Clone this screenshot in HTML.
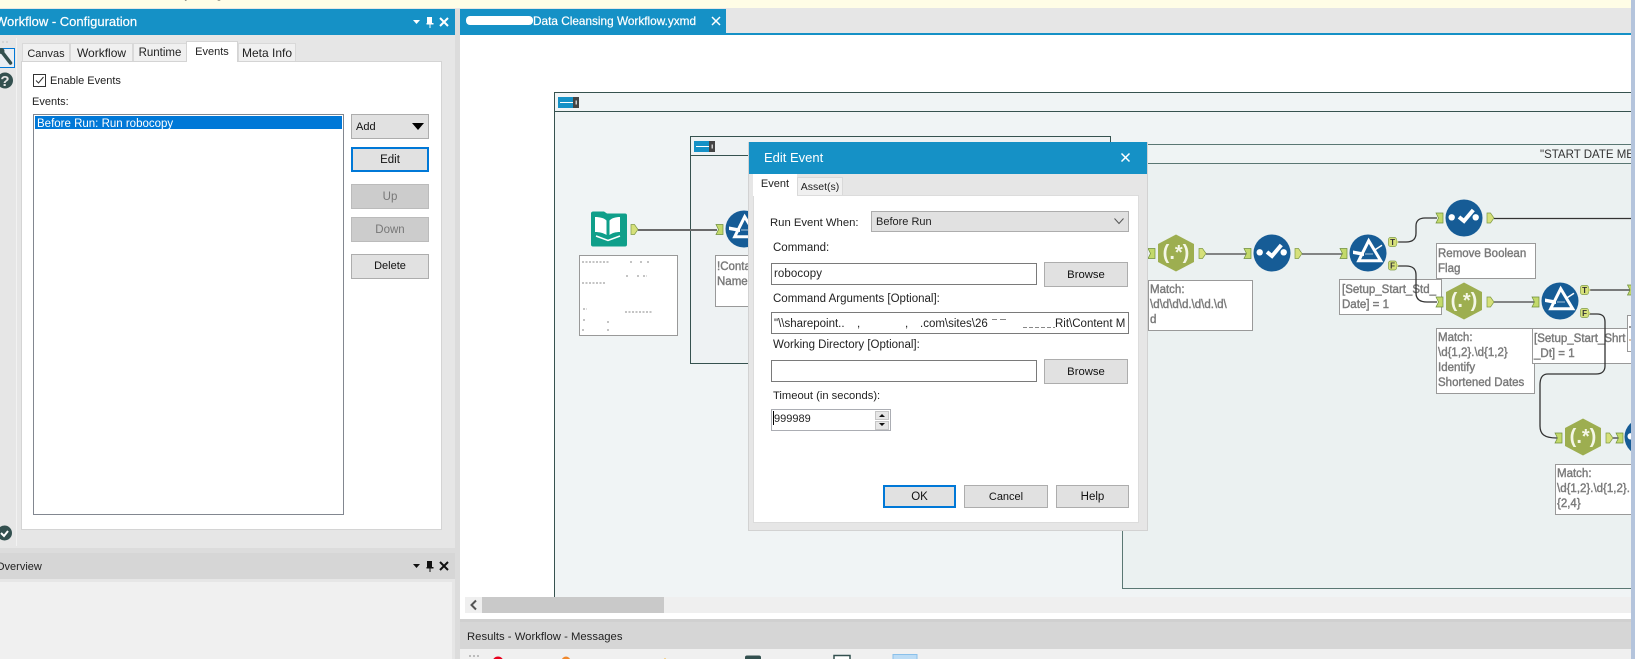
<!DOCTYPE html>
<html><head><meta charset="utf-8"><title>Workflow - Configuration</title>
<style>
html,body{margin:0;padding:0;background:#e6e6e6}
#p{position:relative;width:1635px;height:659px;overflow:hidden;background:#e6e6e6;font-family:"Liberation Sans",sans-serif;font-size:11.5px;color:#222}
#p div{position:absolute;box-sizing:border-box;white-space:nowrap}
.t{line-height:16px;height:16px}
.btn{background:#e1e1e1;border:1px solid #adadad;text-align:center;color:#111}
.dis{background:#ccc;border:1px solid #bbb;color:#777}
.foc{border:2px solid #0078d7}
.inp{background:#fff;border:1px solid #7a7a7a}
.tab{background:#f0f0f0;border:1px solid #d9d9d9;border-bottom:none;text-align:center;line-height:20px}
svg text{font-family:"Liberation Sans",sans-serif}
.a{font-size:11.500px;fill:#7a7a7a;stroke:#7a7a7a;stroke-width:.4px}
</style></head><body>
<div id="p">
<!-- top strip -->
<div style="left:0;top:0;width:1635px;height:8px;background:#fffde6"></div>
<div class="t" style="left:100px;top:-14px;color:#333;font-size:12px">Run Workflow by using</div>

<!-- left panel -->
<div style="left:0;top:9px;width:455px;height:26px;background:#1591c6"></div>
<div class="t" style="left:-5px;top:14px;color:#fff;font-size:13px;-webkit-text-stroke:.2px #fff">Workflow - Configuration</div>
<svg style="position:absolute;left:405px;top:12px" width="50" height="20" viewBox="0 0 50 20">
<path d="M8 8h7l-3.500 4z" fill="#fff"/>
<path d="M22 5h5v6h1.500v1.500h-3V16h-1v-3.500h-3V11H22z" fill="#fff"/>
<path d="M35 6l8 8M43 6l-8 8" stroke="#fff" stroke-width="2" fill="none"/>
</svg>
<div style="left:16px;top:38px;width:1px;height:508px;background:#f2f2f2"></div>
<div style="left:0;top:48px;width:15px;height:20px;border:1px solid #0078d7;border-left:none;background:#e9eef3"></div>
<svg style="position:absolute;left:0;top:40px" width="16" height="54" viewBox="0 0 16 54">
<path d="M2 2h2M6 2h2" stroke="#c4c4c4"/>
<path d="M2 12L10.500 23" stroke="#33504f" stroke-width="3.500" stroke-linecap="round" fill="none"/>
<circle cx="1.500" cy="11" r="3" fill="#33504f"/>
<circle cx="5" cy="40.500" r="8" fill="#33504f"/>
<text x="5" y="46" font-size="15" font-weight="bold" fill="#e6e6e6" text-anchor="middle">?</text>
</svg>
<svg style="position:absolute;left:0;top:525px" width="16" height="16" viewBox="0 0 16 16">
<circle cx="4.500" cy="8" r="7.500" fill="#33504f"/>
<path d="M1 8l3 3 4-5" stroke="#fff" stroke-width="2" fill="none"/>
</svg>
<div class="tab" style="left:22px;top:43px;width:48px;height:19px;font-size:11px">Canvas</div>
<div class="tab" style="left:70px;top:43px;width:63px;height:19px;font-size:12px;line-height:18px">Workflow</div>
<div class="tab" style="left:133px;top:43px;width:54px;height:19px;font-size:11.500px;line-height:18px">Runtime</div>
<div class="tab" style="left:238px;top:43px;width:58px;height:19px;font-size:12px;line-height:18px">Meta Info</div>
<div style="left:21px;top:61px;width:421px;height:469px;background:#fff;border:1px solid #d4d4d4"></div>
<div class="tab" style="left:186px;top:41px;width:52px;height:21px;background:#fff;line-height:20px;border-color:#d4d4d4;font-size:11px">Events</div>
<div style="left:33px;top:74px;width:13px;height:13px;border:1px solid #333;background:#fff"></div>
<svg style="position:absolute;left:33px;top:74px" width="13" height="13" viewBox="0 0 13 13"><path d="M3 6.500l2.500 2.500 5-6" stroke="#333" fill="none" stroke-width="1"/></svg>
<div class="t" style="left:50px;top:73px;font-size:11px">Enable Events</div>
<div class="t" style="left:32px;top:94px;font-size:11px">Events:</div>
<div style="left:33px;top:114px;width:311px;height:401px;background:#fff;border:1px solid #828790"></div>
<div style="left:35px;top:116px;width:307px;height:13px;background:#0078d7"></div>
<div class="t" style="left:37px;top:115px;color:#fff;line-height:18px">Before Run: Run robocopy</div>
<div class="btn" style="left:351px;top:114px;width:78px;height:25px;text-align:left;padding-left:4px;line-height:25px;font-size:11px">Add</div>
<svg style="position:absolute;left:411px;top:122px" width="14" height="9" viewBox="0 0 14 9"><path d="M1 1h12L7 8z" fill="#000"/></svg>
<div class="btn foc" style="left:351px;top:147px;width:78px;height:25px;line-height:23px">Edit</div>
<div class="btn dis" style="left:351px;top:184px;width:78px;height:25px;line-height:25px">Up</div>
<div class="btn dis" style="left:351px;top:217px;width:78px;height:25px;line-height:25px">Down</div>
<div class="btn" style="left:351px;top:254px;width:78px;height:25px;line-height:23px;font-size:11px">Delete</div>

<!-- overview -->
<div style="left:0;top:548px;width:455px;height:5px;background:#dcdcdc"></div>
<div style="left:0;top:553px;width:455px;height:26px;background:#d6d6d6"></div>
<div class="t" style="left:-4px;top:559px;font-size:11px;color:#222">Overview</div>
<svg style="position:absolute;left:405px;top:556px" width="50" height="20" viewBox="0 0 50 20">
<path d="M8 8h7l-3.500 4z" fill="#111"/>
<path d="M22 5h5v6h1.500v1.500h-3V16h-1v-3.500h-3V11H22z" fill="#111"/>
<path d="M35 6l8 8M43 6l-8 8" stroke="#111" stroke-width="2" fill="none"/>
</svg>
<div style="left:0;top:582px;width:452px;height:77px;background:#f0f0f0"></div>
<div style="left:455px;top:9px;width:5px;height:650px;background:#dcdcdc"></div>

<!-- doc tabs -->
<div style="left:726px;top:9px;width:909px;height:24px;background:#e6e6e6"></div>
<div style="left:726px;top:33px;width:909px;height:2px;background:#1591c6"></div>
<div style="left:460px;top:9px;width:266px;height:26px;background:#1591c6"></div>
<div style="left:466px;top:16px;width:67px;height:9px;background:#fff;border-radius:4px"></div>
<div class="t" style="left:533px;top:13px;color:#fff;font-size:11.800px;-webkit-text-stroke:.2px #fff">Data Cleansing Workflow.yxmd</div>
<svg style="position:absolute;left:710px;top:15px" width="14" height="14" viewBox="0 0 14 14"><path d="M2 2l8 8M10 2l-8 8" stroke="#fff" stroke-width="1.500" fill="none"/></svg>

<!-- canvas -->
<div style="left:460px;top:35px;width:1171px;height:584px;background:#fff"></div>
<svg style="position:absolute;left:0;top:0" width="1635" height="659" viewBox="0 0 1635 659">
<defs>
<g id="inA"><path d="M-3.500-5H3.500V5H-3.500L-1 0z" fill="#c3d96b" stroke="#6f8f3c" stroke-width=".7"/></g>
<g id="outA"><path d="M-3.500-5H0L3.500 0 0 5H-3.500z" fill="#d6e07a" stroke="#7f9a45" stroke-width=".7"/></g>
<g id="sel"><circle r="18.500" fill="#165c96"/><circle cx="-12.300" cy="-.7" r="3.200" fill="#fff"/><circle cx="11.700" cy="-.7" r="3.200" fill="#fff"/><path d="M-5-1L0 3 9.300-8" stroke="#fff" stroke-width="4" fill="none"/></g>
<g id="flt"><circle r="18.500" fill="#165c96"/><path d="M.7-12.300L-9.300 7.700H12.700z" stroke="#fff" stroke-width="3" fill="none"/><path d="M-15-2.500L-4-.5V3L-15 1z" fill="#fff"/><path d="M6.700-3L14-7.700" stroke="#fff" stroke-width="1.500"/><path d="M-3 1H5" stroke="#a9c3d9" stroke-width="1"/></g>
<g id="rx"><path d="M0-18.500L18-9V9L0 18.500-18 9V-9z" fill="#9dae50"/><text y="6" font-size="20" font-weight="bold" fill="#f4f6e6" text-anchor="middle">(.*)</text></g>
<g id="tfT"><rect x="-4.500" y="-4.500" width="8" height="9" rx="2" fill="#d6e07a" stroke="#7f9a45" stroke-width=".7"/><path d="M3.500-2.500L5.500 0 3.500 2.500z" fill="#d6e07a"/><text x="-.5" y="3" font-size="8" font-weight="bold" fill="#333" text-anchor="middle">T</text></g>
<g id="tfF"><rect x="-4.500" y="-4.500" width="8" height="9" rx="2" fill="#d6e07a" stroke="#7f9a45" stroke-width=".7"/><path d="M3.500-2.500L5.500 0 3.500 2.500z" fill="#d6e07a"/><text x="-.5" y="3" font-size="8" font-weight="bold" fill="#333" text-anchor="middle">F</text></g>
<g id="min"><rect width="16" height="11" fill="#1591c6"/><rect x="2" y="5" width="13" height="1" fill="#fff"/><rect x="15" width="6" height="11" fill="#444"/><rect x="17.500" y="3.500" width="1.500" height="4" fill="#ccc"/></g>
</defs>
<!-- containers -->
<rect x="554.500" y="92.500" width="1100" height="505" fill="#f0f4f5" stroke="#36524f"/>
<path d="M555 111.500H1631" stroke="#36524f"/>
<use href="#min" x="558" y="97"/>
<rect x="690.500" y="136.500" width="420" height="227" fill="#eef2f3" stroke="#36524f"/>
<path d="M691 155.500H1110" stroke="#36524f"/>
<use href="#min" x="694" y="141"/>
<rect x="1122.500" y="144.500" width="600" height="444" fill="#ebf1f1" stroke="#5a7773"/>
<rect x="1123" y="145" width="510" height="18" fill="#eff4f4"/>
<path d="M1123 163.500H1631" stroke="#5a7773"/>
<text x="1540" y="158" font-size="11.500" fill="#333">"START DATE ME</text>

<!-- book -->
<path d="M591 214a2 2 0 0 1 2-2.500h11l3 2h18a2 2 0 0 1 2 2v29a2 2 0 0 1-2 2H593a2 2 0 0 1-2-2z" fill="#0f9f8a"/>
<path d="M595 217c5 0 9 1 11.500 3.500V235c-3-2-7-3-11.500-3zM620 217c-4.500 0-8 1-10.500 3.500V235c2.500-2 6-3 10.500-3z" fill="#fff"/>
<path d="M596 236l12 4.500 12-4.500" stroke="#fff" stroke-width="1.500" fill="none"/>
<use href="#outA" x="634.500" y="229.500"/>
<path d="M638 230H717" stroke="#6a6a6a" stroke-width="2"/>
<use href="#inA" x="719.500" y="229.500"/>
<use href="#flt" x="744" y="229"/>
<!-- annotation boxes -->
<rect x="579.500" y="255.500" width="98" height="80" fill="#fff" stroke="#999"/>
<path d="M582 262h28M630 262h3M640 262h2M647 262h3M626 276h3M637 276h2M643 276h4M582 283h24M583 309h4M625 312h28M583 320h3M607 322h2M582 330h2M607 330h2" stroke="#888" stroke-width="1" stroke-dasharray="2 1.500" fill="none"/>
<rect x="715.500" y="255.500" width="40" height="51" fill="#fff" stroke="#999"/>
<text class="a" x="717" y="270">!Contai</text><text class="a" x="717" y="285">Name</text>

<!-- row 1 -->
<use href="#inA" x="1151.500" y="253.500"/>
<use href="#rx" x="1176" y="253"/>
<use href="#outA" x="1202.500" y="253.500"/>
<path d="M1206 254H1246" stroke="#444" stroke-width="1.200"/>
<use href="#inA" x="1247.500" y="253.500"/>
<use href="#sel" x="1272" y="253"/>
<use href="#outA" x="1298.500" y="253.500"/>
<path d="M1302 254H1342" stroke="#444" stroke-width="1.200"/>
<use href="#inA" x="1343.500" y="253.500"/>
<rect x="1148.500" y="280.500" width="104" height="50" fill="#fff" stroke="#999"/>
<text class="a" x="1150" y="293">Match:</text><text class="a" x="1150" y="308">\d\d\d\d.\d\d.\d\</text><text class="a" x="1150" y="323">d</text>
<rect x="1339.500" y="279.500" width="102" height="35" fill="#fff" stroke="#999"/>
<text class="a" x="1342" y="293">[Setup_Start_Std_</text><text class="a" x="1342" y="308">Date] = 1</text>
<use href="#flt" x="1368" y="253"/>
<path d="M1397 242H1406C1413 242 1416 239 1416 233V226C1416 221 1419 218 1425 218H1437M1397 266H1406C1413 266 1416 269 1416 275V293C1416 299 1420 302 1427 302H1437" stroke="#333" stroke-width="1.300" fill="none"/>
<use href="#tfT" x="1393" y="242"/>
<use href="#tfF" x="1393" y="265.500"/>
<use href="#inA" x="1439.500" y="218"/>
<use href="#sel" x="1464" y="218"/>
<use href="#outA" x="1490.500" y="218"/>
<path d="M1494 218.500H1631" stroke="#333" stroke-width="1.200"/>
<rect x="1436.500" y="243.500" width="99" height="35" fill="#fff" stroke="#999"/>
<text class="a" x="1438" y="257">Remove Boolean</text><text class="a" x="1438" y="272">Flag</text>
<!-- row 2 -->
<use href="#inA" x="1439.500" y="302"/>
<use href="#rx" x="1464" y="301"/>
<use href="#outA" x="1490.500" y="302"/>
<path d="M1494 302H1534" stroke="#444" stroke-width="1.200"/>
<use href="#inA" x="1535.500" y="302"/>
<use href="#flt" x="1560" y="301"/>
<rect x="1436.500" y="328.500" width="98" height="65" fill="#fff" stroke="#999"/>
<text class="a" x="1438" y="341">Match:</text><text class="a" x="1438" y="356">\d{1,2}.\d{1,2}</text><text class="a" x="1438" y="371">Identify</text><text class="a" x="1438" y="386">Shortened Dates</text>
<rect x="1532.500" y="328.500" width="110" height="35" fill="#fff" stroke="#999"/>
<text class="a" x="1534" y="342">[Setup_Start_Shrt</text><text class="a" x="1534" y="357">_Dt] = 1</text>
<rect x="1627.500" y="315.500" width="10" height="36" fill="#fff" stroke="#999"/>
<path d="M1629 327h2" stroke="#333"/><path d="M1629 340h2" stroke="#b98a5a"/>
<path d="M1589 290H1631" stroke="#333" stroke-width="1.200"/>
<path d="M1589 314H1597C1603 314 1605 317 1605 322V366C1605 371 1602 374 1596 374H1548C1542 374 1540 378 1540 385V426C1540 434 1544 438 1557 438" stroke="#333" stroke-width="1.300" fill="none"/>
<use href="#tfT" x="1585" y="290"/>
<use href="#tfF" x="1585" y="313"/>
<use href="#inA" x="1631" y="290"/>
<!-- row 3 -->
<use href="#inA" x="1558.500" y="438"/>
<use href="#rx" x="1583" y="437"/>
<use href="#outA" x="1609.500" y="438"/>
<path d="M1613 438H1619" stroke="#333" stroke-width="1.200"/>
<use href="#inA" x="1619.500" y="438"/>
<use href="#sel" x="1643" y="437"/>
<rect x="1555.500" y="464.500" width="90" height="50" fill="#fff" stroke="#999"/>
<text class="a" x="1557" y="477">Match:</text><text class="a" x="1557" y="492">\d{1,2}.\d{1,2}.</text><text class="a" x="1557" y="507">{2,4}</text>
</svg>

<!-- scrollbar -->
<div style="left:465px;top:597px;width:1166px;height:16px;background:#efefef"></div>
<div style="left:482px;top:597px;width:182px;height:16px;background:#c9c9c9"></div>
<svg style="position:absolute;left:468px;top:599px" width="12" height="12" viewBox="0 0 12 12"><path d="M8 1.500L3.500 6 8 10.500" stroke="#555" stroke-width="2" fill="none"/></svg>
<!-- results -->
<div style="left:460px;top:619px;width:1171px;height:3px;background:#d0d0d0"></div>
<div style="left:460px;top:622px;width:1171px;height:27px;background:#d6d6d6"></div>
<div class="t" style="left:467px;top:629px;color:#222;font-size:11.300px">Results - Workflow - Messages</div>
<div style="left:460px;top:649px;width:1171px;height:10px;background:#f0f0f0"></div>
<svg style="position:absolute;left:460px;top:649px" width="1171" height="10" viewBox="0 0 1171 10">
<path d="M9 7h2M13 7h2M17 7h2" stroke="#aaa" stroke-width="1.500"/>
<circle cx="38" cy="13" r="5.500" fill="#e8001c"/>
<circle cx="106" cy="12" r="4.500" fill="#f0882c"/>
<path d="M205 9l-5 5h10z" fill="#f2b63a"/>
<rect x="285" y="6.500" width="16" height="8" rx="2" fill="#33504f"/>
<rect x="374" y="6.500" width="16" height="8" fill="#fff" stroke="#33504f" stroke-width="1.500"/>
<rect x="433" y="5.500" width="24" height="6" fill="#bcdcf5" stroke="#8ac0ea"/>
</svg>
<!-- right strip -->
<div style="left:1631px;top:0;width:4px;height:659px;background:#b4c4dc"></div>

<!-- dialog -->
<div style="left:748px;top:142px;width:400px;height:389px;background:#e6e6e6;border:1px solid #d2d2d2"></div>
<div style="left:749px;top:142px;width:398px;height:32px;background:#1591c6"></div>
<div class="t" style="left:764px;top:150px;color:#fff;font-size:13px">Edit Event</div>
<svg style="position:absolute;left:1119px;top:151px" width="14" height="14" viewBox="0 0 14 14"><path d="M2.500 2.500l8 8M10.500 2.500l-8 8" stroke="#fff" stroke-width="1.500" fill="none"/></svg>
<div style="left:753px;top:195px;width:386px;height:328px;background:#fff;border:1px solid #dcdcdc"></div>
<div class="tab" style="left:797px;top:177px;width:46px;height:18px;font-size:10.500px;line-height:18px">Asset(s)</div>
<div style="left:753px;top:174px;width:44px;height:22px;background:#fff;text-align:center;line-height:21px;font-size:11px">Event</div>
<div class="t" style="left:770px;top:215px;font-size:11.300px">Run Event When:</div>
<div style="left:871px;top:211px;width:258px;height:21px;background:#e1e1e1;border:1px solid #adadad;padding-left:4px;line-height:21px;font-size:11px">Before Run</div>
<svg style="position:absolute;left:1113px;top:217px" width="12" height="9" viewBox="0 0 12 9"><path d="M1.500 1.500L6 6.500l4.500-5" stroke="#555" fill="none"/></svg>
<div class="t" style="left:773px;top:240px">Command:</div>
<div class="inp" style="left:771px;top:263px;width:266px;height:22px;padding-left:2px;line-height:21px;font-size:11.500px;letter-spacing:.1px">robocopy</div>
<div class="btn" style="left:1044px;top:262px;width:84px;height:25px;line-height:25px;font-size:11.300px">Browse</div>
<div class="t" style="left:773px;top:291px">Command Arguments [Optional]:</div>
<div class="inp" style="left:771px;top:312px;width:358px;height:22px;overflow:hidden">
<div class="t" style="left:2px;top:3px">"\\sharepoint..</div>
<div class="t" style="left:85px;top:3px">,</div>
<div class="t" style="left:133px;top:3px">,</div>
<div class="t" style="left:148px;top:3px">.com\sites\26</div>
<div style="left:220px;top:6px;width:5px;height:1px;background:#888"></div>
<div style="left:228px;top:6px;width:6px;height:1px;background:#888"></div>
<div style="left:251px;top:14px;width:32px;height:1px;background:repeating-linear-gradient(90deg,#888 0 4px,#fff 4px 6px)"></div>
<div class="t" style="left:283px;top:3px;width:71px;overflow:hidden">Rit\Content M</div>
</div>
<div class="t" style="left:773px;top:337px">Working Directory [Optional]:</div>
<div class="inp" style="left:771px;top:360px;width:266px;height:22px"></div>
<div class="btn" style="left:1044px;top:359px;width:84px;height:25px;line-height:25px;font-size:11.300px">Browse</div>
<div class="t" style="left:773px;top:388px;font-size:11.200px">Timeout (in seconds):</div>
<div style="left:771px;top:409px;width:120px;height:22px;background:#fff;border:1px solid #abadb3;padding-left:2px;line-height:19px;font-size:11px">999989</div>
<div style="left:773px;top:411px;width:1px;height:14px;background:#000"></div>
<div style="left:875px;top:411px;width:14px;height:9px;background:#e6e6e6;border:1px solid #c6c6c6"></div>
<div style="left:875px;top:421px;width:14px;height:9px;background:#e6e6e6;border:1px solid #c6c6c6"></div>
<svg style="position:absolute;left:875px;top:411px" width="14" height="19" viewBox="0 0 14 19"><path d="M4 6h6L7 3zM4 12h6l-3 3z" fill="#111"/></svg>
<div class="btn foc" style="left:883px;top:485px;width:73px;height:23px;line-height:21px">OK</div>
<div class="btn" style="left:964px;top:485px;width:84px;height:23px;line-height:23px;font-size:11px">Cancel</div>
<div class="btn" style="left:1056px;top:485px;width:73px;height:23px;line-height:23px">Help</div>
</div>
</body></html>
